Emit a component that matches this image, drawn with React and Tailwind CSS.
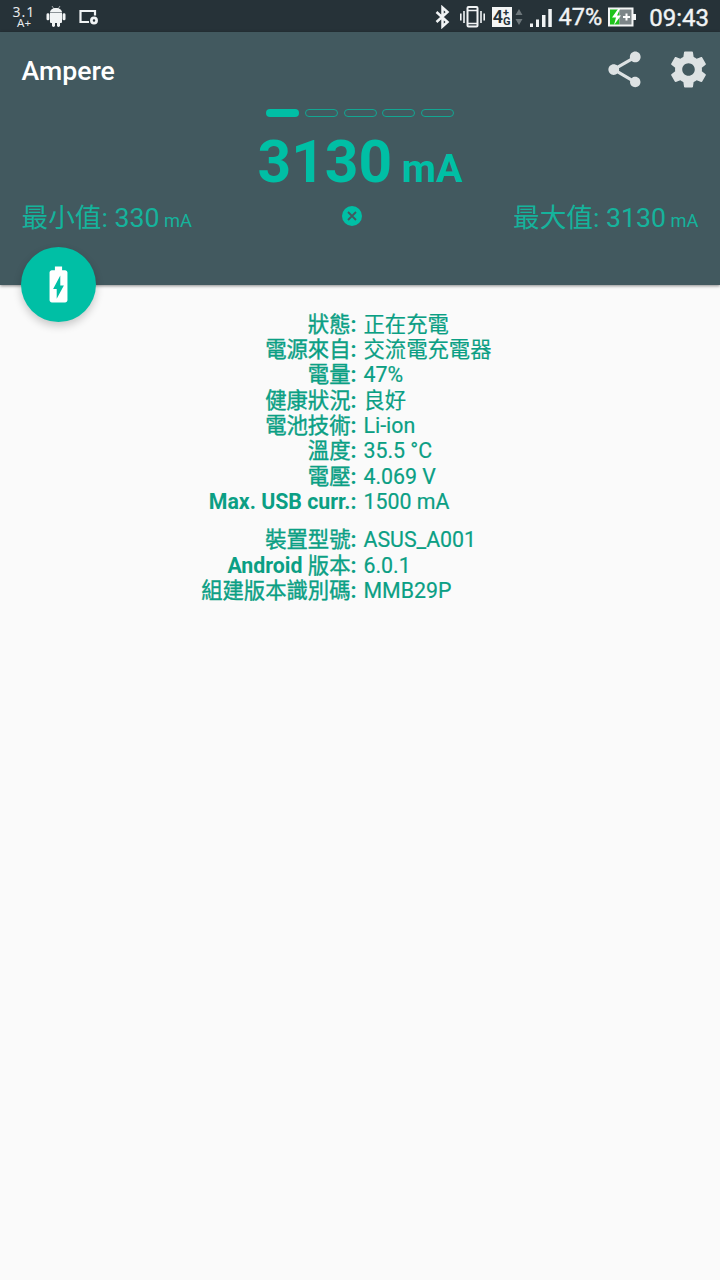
import { Fragment } from "react";

const info = [
  ["狀態:", "正在充電"],
  ["電源來自:", "交流電充電器"],
  ["電量:", "47%"],
  ["健康狀況:", "良好"],
  ["電池技術:", "Li-ion"],
  ["溫度:", "35.5 °C"],
  ["電壓:", "4.069 V"],
  ["Max. USB curr.:", "1500 mA"],
];

const device = [
  ["裝置型號:", "ASUS_A001"],
  ["Android 版本:", "6.0.1"],
  ["組建版本識別碼:", "MMB29P"],
];

// Chinese glyphs get a thin stroke instead of the full bold weight
function Label({ text }) {
  return text.split(/([\u4e00-\u9fff]+)/).map((part, i) =>
    i % 2 ? (
      <span key={i} className="font-normal [-webkit-text-stroke:0.4px_#0b9f84]">
        {part}
      </span>
    ) : (
      <Fragment key={i}>{part}</Fragment>
    )
  );
}

function Rows({ items }) {
  return items.map(([label, value]) => (
    <div key={label} className="flex h-[25.4px] items-center whitespace-pre">
      <div className="w-[356.5px] text-right font-bold">
        <Label text={label} />
      </div>
      <div className="ml-[7px] [-webkit-text-stroke:0.2px_#0b9f84]">{value}</div>
    </div>
  ));
}

function StatusBar() {
  return (
    <div className="flex h-8 items-center bg-[#263238] text-[#f1f4f5]">
      <div className="ml-[12px] flex w-[24px] flex-col items-center font-['Noto_Sans',sans-serif] text-[#e6eaeb]">
        <span className="mt-px h-[11px] text-[14px] leading-[11px] tracking-[1px]">3.1</span>
        <span className="h-[10px] text-[11.500px] leading-[11px]">A+</span>
      </div>
      <svg className="ml-[10px] mt-[2px] h-[22px] w-[20px]" viewBox="0 0 20 22" fill="currentColor">
        <path d="M4 6.500C4 3.800 6.500 2 10 2s6 1.800 6 4.500z" />
        <path d="M6 0l2 3M14 0l-2 3" stroke="currentColor" strokeWidth="0.6" />
        <path d="M4 7.100h12V16q0 1-1 1H5q-1 0-1-1z" />
        <rect x="0.500" y="7.300" width="2.900" height="7" rx="1.400" />
        <rect x="16.600" y="7.300" width="2.900" height="7" rx="1.400" />
        <rect x="6" y="15" width="3" height="6" rx="1.400" />
        <rect x="11" y="15" width="3" height="6" rx="1.400" />
      </svg>
      <svg className="ml-[12px] mt-[2px] h-[18px] w-[22px]" viewBox="0 0 22 18" fill="none" stroke="currentColor">
        <path d="M17 7.500V3H2.500v11H11" strokeWidth="2.200" />
        <circle cx="16" cy="12.500" r="2.600" strokeWidth="2.700" />
      </svg>

      <div className="ml-auto flex items-center pt-[2px]">
        <svg className="h-[24px] w-[16px]" viewBox="0 0 16 24" fill="none" stroke="currentColor" strokeWidth="2.500">
          <path d="M2.500 7l11 10-5 4.500V2.500l5 4.500-11 10" />
        </svg>
        <svg className="ml-[9px] h-[24px] w-[26px]" viewBox="0 0 26 24" fill="none" stroke="currentColor">
          <rect x="8.500" y="2" width="10" height="19.500" rx="1" strokeWidth="2" />
          <path d="M8.500 5.500h10M8.500 18.500h10" strokeWidth="1.500" />
          <path d="M5 6v12M22 6v12" strokeWidth="1.600" />
          <path d="M1.800 8.500v7M25.200 8.500v7" strokeWidth="1.600" />
        </svg>
        <div className="ml-[7px] flex h-[20px] w-[20px] items-center justify-center bg-[#f4f6f6] font-['Roboto',sans-serif] text-[#263238]">
          <span className="text-[18px] font-semibold leading-none">4</span>
          <span className="flex flex-col text-[11px] font-bold leading-[9px]">
            <span>+</span>
            <span>G</span>
          </span>
        </div>
        <svg className="ml-[3px] h-[18px] w-[8px]" viewBox="0 0 8 18" fill="#6d777b">
          <path d="M4 1l3.500 6h-7zM4 17l3.500-6h-7z" />
        </svg>
        <svg className="ml-[7px] mt-[2px] h-[20px] w-[22px]" viewBox="0 0 22 20" fill="currentColor">
          <path d="M0 15.500h3V19H0zM6 11.500h3V19H6zM12 7h3.500v12H12zM18.300 1h3.500v18h-3.500z" />
        </svg>
        <span className="ml-[7px] pt-[2px] text-[23.500px] leading-none [-webkit-text-stroke:0.4px_#f1f4f5]">47%</span>
        <svg className="ml-[6px] h-[20px] w-[29px]" viewBox="0 0 29 20">
          <path d="M0 .5h25.500V7H28v6h-2.500v6.500H0z" fill="#f4f6f6" />
          <path d="M2 2.500h9.500v15H2z" fill="#1fc41c" />
          <path d="M11.500 2.500h12v15h-12z" fill="#7c8588" />
          <path d="M10 2L4 10.500h4L6 18l7-9.500H9L12 2z" fill="#fff" />
          <path d="M15 10h7M18.500 6.500v7" stroke="#fff" strokeWidth="2" />
        </svg>
        <span className="ml-[12px] mr-[11px] pt-px text-[24px] leading-none [-webkit-text-stroke:0.4px_#f1f4f5]">09:43</span>
      </div>
    </div>
  );
}

export default function App() {
  return (
    <div className="h-[1280px] w-[720px] overflow-hidden bg-[#fafafa] font-['Roboto','Noto_Sans_CJK_TC',sans-serif]">
      <StatusBar />

      <header className="relative h-[252.500px] bg-[#42595f] text-[#00bfa5] shadow-[0_1px_3px_rgba(0,0,0,0.45)]">
        <div className="flex h-[75px] items-center pl-[21.500px] text-white">
          <h1 className="pt-[4px] text-[26.670px] font-medium leading-none">Ampere</h1>
          <svg className="ml-auto h-[43px] w-[43px]" viewBox="0 0 24 24" fill="#dde2e3">
            <path d="M18 16.080c-.76 0-1.440.3-1.960.77L8.910 12.700c.05-.23.09-.46.09-.7s-.04-.47-.09-.7l7.050-4.110c.54.5 1.250.81 2.040.81 1.660 0 3-1.340 3-3s-1.340-3-3-3-3 1.340-3 3c0 .24.04.47.09.7L8.040 9.810C7.500 9.310 6.790 9 6 9c-1.660 0-3 1.340-3 3s1.340 3 3 3c.79 0 1.500-.31 2.040-.81l7.120 4.160c-.05.21-.08.43-.08.65 0 1.610 1.310 2.920 2.920 2.920s2.920-1.310 2.920-2.920-1.310-2.920-2.920-2.920z" />
          </svg>
          <svg className="ml-[21px] mr-[10.500px] h-[43px] w-[43px]" viewBox="0 0 24 24" fill="#dde2e3">
            <path d="M19.430 12.980c.04-.32.07-.64.07-.98s-.03-.66-.07-.98l2.110-1.650c.19-.15.24-.42.12-.64l-2-3.460c-.12-.22-.39-.3-.61-.22l-2.490 1c-.52-.4-1.080-.73-1.690-.98l-.38-2.650C14.460 2.180 14.250 2 14 2h-4c-.25 0-.46.18-.49.42l-.38 2.650c-.61.25-1.170.59-1.690.98l-2.490-1c-.23-.09-.49 0-.61.22l-2 3.460c-.13.22-.07.49.12.64l2.110 1.650c-.04.32-.07.65-.07.98s.03.66.07.98l-2.110 1.650c-.19.15-.24.42-.12.64l2 3.460c.12.22.39.3.61.22l2.490-1c.52.4 1.080.73 1.690.98l.38 2.650c.03.24.24.42.49.42h4c.25 0 .46-.18.49-.42l.38-2.650c.61-.25 1.170-.59 1.690-.98l2.490 1c.23.09.49 0 .61-.22l2-3.460c.12-.22.07-.49-.12-.64l-2.110-1.650zM12 15.500c-1.930 0-3.500-1.570-3.500-3.500s1.570-3.500 3.500-3.500 3.500 1.570 3.500 3.500-1.570 3.500-3.500 3.500z" />
          </svg>
        </div>

        <div className="mt-[2px] flex justify-center gap-[5.700px]">
          <div className="h-[8px] w-[33px] rounded-full bg-[#00bfa5]" />
          <div className="h-[8px] w-[33px] rounded-full border border-[#12a692]" />
          <div className="h-[8px] w-[33px] rounded-full border border-[#12a692]" />
          <div className="h-[8px] w-[33px] rounded-full border border-[#12a692]" />
          <div className="h-[8px] w-[33px] rounded-full border border-[#12a692]" />
        </div>

        <div className="mt-[15px] flex items-baseline justify-center font-bold leading-[60px]">
          <span className="text-[58.670px]">3130</span>
          <span className="ml-[9.500px] text-[39.500px]">mA</span>
        </div>

        <div className="mt-[3px] grid h-[32px] grid-cols-[1fr_20px_1fr] items-center px-[21.500px] text-[26.670px] leading-8 text-[#15b39c]">
          <div>
            最小值: 330<span className="ml-[4.500px] text-[18.300px]">mA</span>
          </div>
          <svg className="-ml-[8px] -mt-[7px] h-[20px] w-[20px]" viewBox="0 0 20 20">
            <circle cx="10" cy="10" r="10" fill="#00bfa5" />
            <path d="M6 6l8 8M14 6l-8 8" stroke="#42595f" strokeWidth="1.800" />
          </svg>
          <div className="text-right">
            最大值: 3130<span className="ml-[4.500px] text-[18.300px]">mA</span>
          </div>
        </div>

        <button className="absolute -bottom-[37.500px] left-[21px] flex h-[75px] w-[75px] items-center justify-center rounded-full bg-[#00bfa5] shadow-[0_4px_9px_rgba(0,0,0,0.2)]">
          <svg className="h-[43px] w-[43px]" viewBox="0 0 24 24" fill="#fff">
            <path d="M15.670 4H14V2h-4v2H8.330C7.600 4 7 4.600 7 5.330v15.330C7 21.400 7.600 22 8.330 22h7.330c.74 0 1.340-.6 1.340-1.330V5.330C17 4.600 16.400 4 15.670 4zM11 20v-5.500H9L13 7v5.500h2L11 20z" />
          </svg>
        </button>
      </header>

      <main className="flex flex-col gap-[12.700px] pt-[27px] text-[21.330px] leading-none text-[#0b9f84]">
        <section>
          <Rows items={info} />
        </section>
        <section>
          <Rows items={device} />
        </section>
      </main>
    </div>
  );
}
